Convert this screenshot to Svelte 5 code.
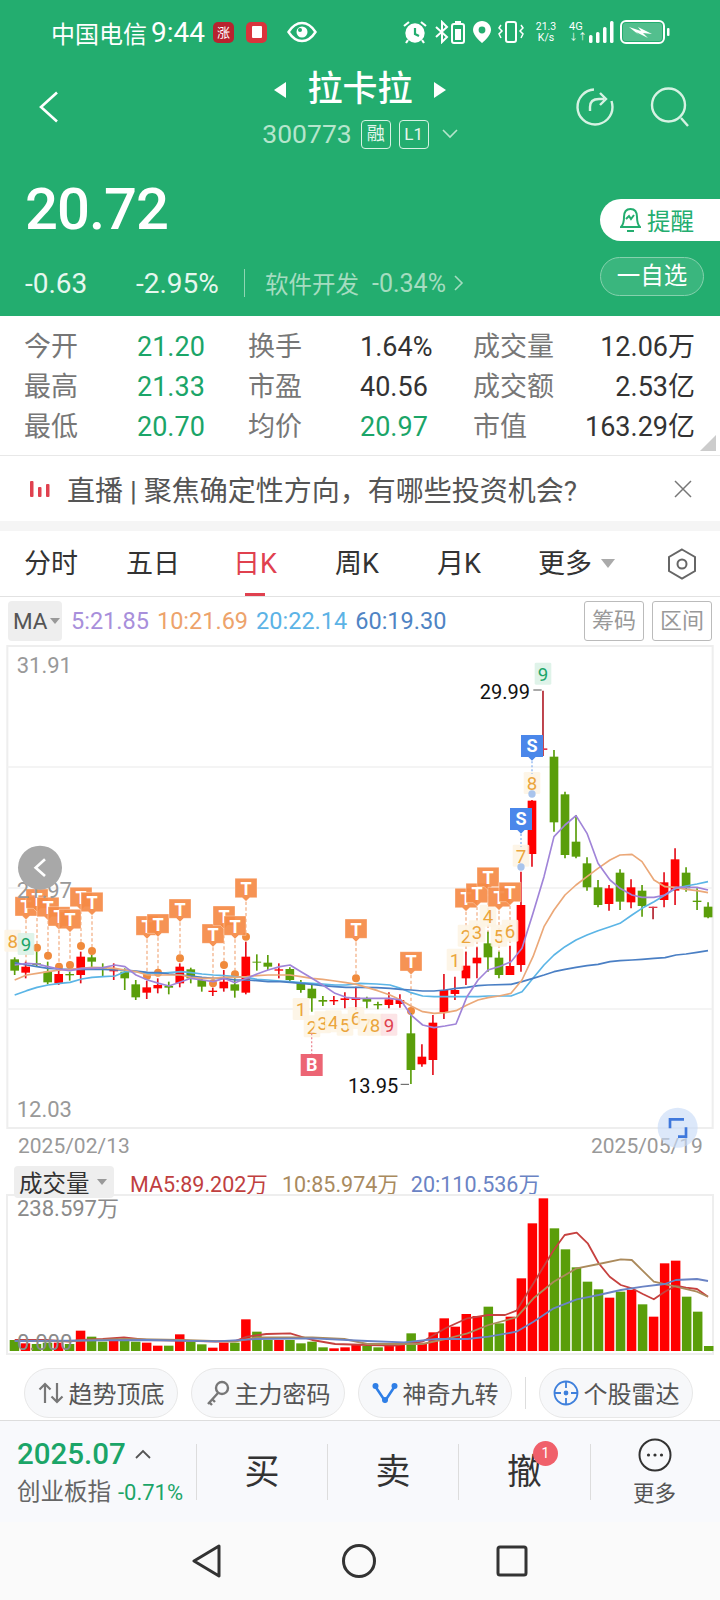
<script>
  // chart data is in 3x units: x = px * 3, y = (px - 650) * 3
  const candles = [
    ['g',922,975,928,962],['r',935,985,950,968],['g',905,950,940,945],['g',935,1003,965,997],
    ['r',960,1005,972,1000],['g',965,992,972,976],['r',905,1000,920,975],['g',915,960,922,935],
    ['g',940,978,955,960],['r',940,990,958,964],['g',955,1020,965,985],['g',990,1050,1003,1042],
    ['r',992,1047,1012,1028],['r',985,1030,1005,1015],['g',995,1033,1008,1013],['r',940,1012,950,1000],
    ['g',953,1000,958,985],['g',985,1025,990,1010],['r',1013,1038,1022,1026],['r',960,1025,995,1015],
    ['g',985,1043,1003,1022],['r',875,1033,920,1028],['g',913,962,935,938],['g',915,960,938,950],
    ['r',940,985,958,962],['g',952,997,957,990],['g',990,1028,1000,1020],['g',1005,1085,1016,1045],
    ['g',1038,1068,1050,1055],['r',1038,1065,1050,1054],['r',1027,1075,1045,1050],['r',1010,1080,1043,1050],
    ['g',1040,1075,1045,1055],['g',1055,1078,1062,1066],['r',1027,1075,1048,1065],['r',1033,1073,1050,1062],
    ['g',1090,1302,1150,1260],['r',1183,1250,1220,1243],['r',1095,1275,1118,1230],['r',972,1107,1020,1087],
    ['r',980,1050,1020,1032],['r',905,1005,947,985],['r',892,985,923,940],['g',845,965,880,922],
    ['g',905,985,923,975],['r',888,975,948,975],['r',665,965,765,945],['r',450,650,452,612],
    ['d',122,318,295,300],['g',300,545,320,517],['g',425,625,433,615],['g',495,625,575,620],
    ['g',622,722,640,712],['g',690,772,712,765],['r',705,782,715,762],['g',658,780,668,755],
    ['r',688,775,712,757],['g',705,800,722,768],['d',770,808,770,774],['r',667,772,697,750],
    ['r',595,765,628,722],['g',652,725,668,715],['g',715,780,752,756],['g',757,805,770,802]
  ];
  const cx = (i) => 44 + i * 33.02;

  const lines = [
    { color: '#5bb5e6', d: '44,1035 80,1022 111,1012 144,1005 180,1000 210,997 245,987 276,982 309,980 345,978 375,965 408,965 443,970 477,970 507,968 543,965 573,968 606,972 640,975 672,977 705,980 740,982 771,988 804,990 840,993 870,995 903,998 936,1000 968,1002 1005,1005 1038,1005 1080,1000 1130,1002 1170,1005 1202,1015 1233,1028 1268,1038 1302,1040 1335,1040 1368,1040 1401,1040 1434,1040 1464,1038 1533,1038 1566,1025 1599,985 1632,945 1662,915 1695,890 1728,870 1761,855 1794,842 1830,830 1860,820 1896,795 1926,775 1962,755 1995,735 2028,715 2058,708 2091,702 2124,695' },
    { color: '#4a7fc4', d: '44,938 80,945 111,950 144,955 180,957 210,958 245,958 276,958 309,958 345,960 375,960 408,963 443,967 477,968 507,972 543,975 573,978 606,982 640,985 672,985 705,990 740,990 771,992 804,995 840,995 870,997 903,1000 936,1003 968,1007 1005,1010 1038,1012 1080,1012 1130,1013 1170,1015 1202,1018 1233,1020 1268,1023 1302,1023 1335,1020 1368,1015 1401,1012 1434,1007 1464,1005 1533,1003 1566,995 1599,985 1632,975 1662,965 1695,958 1728,952 1761,947 1794,943 1830,935 1860,932 1896,930 1926,928 1962,925 1995,923 2028,915 2058,912 2091,907 2124,902' },
    { color: '#eba878', d: '44,990 80,975 111,970 144,965 180,960 210,958 245,955 276,952 309,953 345,955 375,960 408,965 443,975 477,975 507,975 543,975 573,982 606,985 640,985 672,982 705,982 740,980 771,977 804,975 840,975 870,975 903,980 936,985 968,988 1005,993 1038,998 1070,1003 1100,1012 1133,1022 1170,1035 1202,1050 1233,1068 1268,1085 1302,1090 1335,1088 1368,1082 1401,1065 1434,1050 1464,1043 1497,1038 1533,1030 1566,990 1599,920 1632,830 1662,780 1695,735 1728,705 1761,680 1794,655 1830,630 1860,615 1896,613 1926,635 1962,690 1995,710 2028,712 2058,718 2091,722 2124,728' },
    { color: '#a084d8', d: '44,945 80,940 111,942 144,950 180,958 210,962 245,955 276,955 309,953 345,945 375,950 408,975 443,990 477,1000 507,1008 543,995 573,985 606,990 640,995 672,985 705,998 740,985 771,972 804,960 840,950 870,945 903,965 936,985 968,1005 1005,1030 1038,1042 1070,1045 1100,1045 1133,1045 1170,1045 1202,1050 1233,1095 1268,1125 1302,1133 1335,1128 1368,1122 1401,1040 1434,990 1464,960 1497,950 1533,935 1566,895 1599,790 1632,680 1662,560 1695,525 1728,497 1761,550 1794,640 1830,690 1860,715 1896,735 1926,742 1962,742 1995,735 2028,712 2058,712 2091,712 2124,720' }
  ];

  // [center x, top y, dot y]
  const flags = [
    [78,740,0],[111,717,893],[144,742,917],[177,770,950],[210,778,945],[243,712,888],[276,727,903],
    [441,798,978],[474,792,968],[540,747,925],[639,822,1000],[672,768,945],[705,798,973],[738,685,860],
    [1068,807,985],[1233,905,1083],[1398,715,0],[1431,700,0],[1464,652,0],[1497,712,0],[1530,697,0]
  ];
  const digits = [
    [38,873,'8','o'],[78,883,'9','g'],[903,1078,'1','o'],[936,1130,'2','o'],[968,1118,'3','o'],[1000,1115,'4','o'],
    [1035,1125,'5','o'],[1068,1105,'6','o'],[1098,1125,'7','o'],[1125,1125,'8','o'],[1167,1125,'9','r'],
    [1365,930,'1','o'],[1398,858,'2','o'],[1431,845,'3','o'],[1464,798,'4','o'],[1497,858,'5','o'],[1530,843,'6','o'],
    [1563,618,'7','o'],[1596,400,'8','o'],[1629,72,'9','g']
  ];
  const digitColor = { o: '#eba53c', g: '#1ba568', r: '#e0414f' };
  const digitBg = { o: '#fdf3e3', g: '#d9f1e5', r: '#fbdfe2' };

  // volume: [colour, top] with top in the 1140-based 3x y
  const bars = 'g600 r610 g612 g608 r608 g612 r572 g590 g605 r595 g600 g605 r608 r617 g617 r583 g605 g613 r623 r608 g608 r538 g575 g600 r600 g600 g610 g605 g622 r625 r622 r612 g618 g622 r615 r615 g580 r612 r577 r535 r560 r522 r528 g500 g550 r530 r415 r250 r175 g265 g328 g382 g425 g448 r473 g455 r450 g493 r530 r370 r362 g470 g515 g618'
    .split(' ').map((s) => [s[0], +s.slice(1)]);
  const vy = (y) => y / 3 + 1140 - 1199;
  const scaleVol = (s) => s.split(' ').map((p) => {
    const [x, y] = p.split(',');
    return `${(+x / 2.178).toFixed(1)},${vy(+y).toFixed(1)}`;
  }).join(' ');
  const volLines = [
    { color: '#c6413f', d: scaleVol('32,600 100,600 150,605 178,600 224,597 270,592 320,600 394,602 470,605 512,603 538,590 580,582 632,580 680,600 730,612 800,615 860,617 920,605 970,565 1018,535 1064,525 1100,525 1125,512 1162,430 1206,330 1230,285 1256,278 1280,310 1304,370 1328,410 1352,435 1376,445 1400,462 1424,478 1448,455 1472,437 1494,443 1518,447 1542,470') },
    { color: '#ab8a5c', d: scaleVol('32,603 150,603 270,597 394,600 512,605 560,592 680,592 750,597 800,612 920,612 970,597 1018,580 1064,555 1125,532 1162,475 1206,425 1256,385 1304,372 1352,358 1376,360 1424,425 1472,440 1518,455 1542,470') },
    { color: '#6a83c4', d: scaleVol('32,603 150,602 320,600 470,604 560,597 680,595 800,603 880,607 950,597 1018,597 1064,590 1125,575 1162,545 1206,505 1256,478 1304,465 1352,450 1400,440 1448,432 1472,420 1518,417 1542,423') }
  ];

  const stats = [
    ['今开','21.20','换手','1.64%','成交量','12.06万'],
    ['最高','21.33','市盈','40.56','成交额','2.53亿'],
    ['最低','20.70','均价','20.97','市值','163.29亿']
  ];
  const greens = ['21.20','21.33','20.70','20.97'];
  const tabs = ['分时','五日','日K','周K','月K'];
</script>

<div class="phone">
  <header class="head">
    <div class="status">
      <span class="carrier">中国电信</span>
      <span class="clock">9:44</span>
      <span class="app-red dark">涨</span>
      <span class="app-red"><i></i></span>
      <svg class="eye" width="30" height="22" viewBox="0 0 30 22" fill="none" stroke="#fff" stroke-width="2.4">
        <path d="M1.5 11C6 4 10 2 15 2s9 2 13.5 9C24 18 20 20 15 20S6 18 1.5 11z" />
        <circle cx="15" cy="11" r="5.5" fill="#fff" stroke="none" />
        <circle cx="13" cy="9" r="2" fill="#23ad6f" stroke="none" />
      </svg>
      <div class="sys">
        <svg width="26" height="24" viewBox="0 0 26 24" fill="none" stroke="#fff" stroke-width="2.2">
          <circle cx="13" cy="13" r="8.6" fill="#fff" />
          <path d="M13 8v6l4 2" stroke="#23ad6f" />
          <path d="M2 6l5-4M24 6l-5-4M6 20l-2 3M20 20l2 3" />
        </svg>
        <svg width="32" height="24" viewBox="0 0 32 24" fill="none" stroke="#fff" stroke-width="2">
          <path d="M2 7l11 10-5 5V2l5 5L2 17" />
          <rect x="18" y="4" width="12" height="19" rx="2" />
          <rect x="21" y="9" width="6" height="11" fill="#fff" stroke="none" />
          <path d="M21 2h6" />
        </svg>
        <svg width="20" height="24" viewBox="0 0 20 24">
          <path d="M10 1C5 1 1 5 1 10c0 6 9 13 9 13s9-7 9-13c0-5-4-9-9-9z" fill="#fff" />
          <circle cx="10" cy="10" r="3.4" fill="#23ad6f" />
        </svg>
        <svg width="26" height="24" viewBox="0 0 26 24" fill="none" stroke="#fff" stroke-width="2">
          <rect x="8" y="2" width="10" height="20" rx="2" />
          <path d="M3 5l-2 3 3 3-3 3 2 4M23 5l2 3-3 3 3 3-2 4" stroke-width="1.5" />
        </svg>
        <span class="speed">21.3<br />K/s</span>
        <div class="net">
          <span>4G</span>
          <small>↓↑</small>
        </div>
        <svg class="bars" width="25" height="24" viewBox="0 0 25 24" fill="#fff">
          <rect x="0" y="15" width="3.5" height="8" rx="1.5" />
          <rect x="7" y="12" width="3.5" height="11" rx="1.5" />
          <rect x="14" y="7" width="3.5" height="16" rx="1.5" />
          <rect x="21" y="1" width="3.5" height="22" rx="1.5" />
        </svg>
        <svg width="50" height="24" viewBox="0 0 50 24" fill="none">
          <rect x="1" y="1" width="43" height="22" rx="5" stroke="#fff" stroke-width="2" />
          <rect x="3" y="3" width="39" height="18" rx="3" fill="#fff" fill-opacity=".22" />
          <path d="M9 7l12 4-3-4 14 7-9-1 5 5-12-6 3 3z" fill="#fff" />
          <rect x="47" y="8" width="2.5" height="8" rx="1" fill="#fff" />
        </svg>
      </div>
    </div>

    <div class="nav">
      <svg class="back" width="20" height="32" viewBox="0 0 20 32" fill="none" stroke="#fff" stroke-width="2.6">
        <path d="M18 1.5L2 16l16 14.5" />
      </svg>
      <div class="title">
        <div class="name">
          <i class="tri left"></i>
          <span>拉卡拉</span>
          <i class="tri right"></i>
        </div>
        <div class="code">
          <span class="num">300773</span>
          <span class="tag">融</span>
          <span class="tag l1">L1</span>
          <svg width="16" height="10" viewBox="0 0 16 10" fill="none" stroke="#b5e5cc" stroke-width="1.6"><path d="M1 1l7 7 7-7" /></svg>
        </div>
      </div>
      <div class="nav-right">
        <svg width="40" height="40" viewBox="0 0 40 40" fill="none" stroke="#d6f2e3" stroke-width="2.4">
          <path d="M19 2.5A17.5 17.5 0 1 0 37.5 20c0-2.5-.4-4-1-6" />
          <path d="M15 24v-4c0-5 3-8 9-8h5M25 6l6 6-6 6" />
        </svg>
        <svg width="40" height="40" viewBox="0 0 40 40" fill="none" stroke="#d6f2e3" stroke-width="2.4">
          <circle cx="18.5" cy="18" r="16.5" />
          <path d="M31 31l7 8" />
        </svg>
      </div>
    </div>

    <div class="quote">
      <div>
        <div class="price">20.72</div>
        <div class="change">
          <span class="chg1">-0.63</span>
          <span class="chg2">-2.95%</span>
          <span class="vsep"></span>
          <span class="sector">软件开发</span>
          <span class="sector-chg">-0.34%</span>
          <svg width="10" height="16" viewBox="0 0 10 16" fill="none" stroke="#a5dcc0" stroke-width="1.6"><path d="M1 1l7 7-7 7" /></svg>
        </div>
      </div>
      <div class="pills">
        <div class="remind">
          <svg width="21" height="26" viewBox="0 0 21 26" fill="none" stroke="#23ad6f" stroke-width="2">
            <path d="M10.5 2C6 2 4 5.5 4 10c0 5-1 8-3 10h19c-2-2-3-5-3-10 0-4.5-2-8-6.5-8z" />
            <path d="M7 24h7M6 12l3-3 2 3 3-4" />
          </svg>
          <span>提醒</span>
        </div>
        <div class="watch">一自选</div>
      </div>
    </div>
  </header>

  <section class="stats">
    {#each stats as row}
      {#each row as cell, i}
        <span class:label={i % 2 === 0} class:green={greens.includes(cell)} class:last={i === 5}>{cell}</span>
      {/each}
    {/each}
    <i class="corner"></i>
  </section>

  <section class="news">
    <svg width="20" height="16" viewBox="0 0 20 16" fill="#e0414f">
      <rect x="0" y="0" width="3.5" height="16" rx="1" />
      <rect x="8" y="6" width="3.5" height="10" rx="1" />
      <rect x="16" y="3" width="3.5" height="13" rx="1" />
    </svg>
    <span>直播 | 聚焦确定性方向，有哪些投资机会?</span>
    <svg class="close" width="18" height="18" viewBox="0 0 18 18" stroke="#777" stroke-width="1.5"><path d="M1 1l16 16M17 1L1 17" /></svg>
  </section>

  <nav class="tabs">
    {#each tabs as t}
      <span class="tab" class:on={t === '日K'}>{t}</span>
    {/each}
    <span class="tab more">更多<i></i></span>
    <svg class="hex" width="28" height="32" viewBox="0 0 28 32" fill="none" stroke="#666" stroke-width="2">
      <path d="M14 1.5L27 9v14l-13 7.5L1 23V9z" />
      <circle cx="14" cy="16" r="4.5" />
    </svg>
  </nav>

  <div class="ma-row">
    <span class="chip">MA<i></i></span>
    <span class="m5">5:21.85</span>
    <span class="m10">10:21.69</span>
    <span class="m20">20:22.14</span>
    <span class="m60">60:19.30</span>
    <span class="btn first">筹码</span>
    <span class="btn">区间</span>
  </div>

  <div class="chart">
    <svg width="720" height="516" viewBox="0 -15 2160 1548">
      <rect x="22" y="-12" width="2116" height="1446" fill="#fff" stroke="#eee" stroke-width="6" />
      {#each [351, 714, 1077] as y}
        <line x1="22" x2="2138" y1={y} y2={y} stroke="#f1f1f1" stroke-width="4" />
      {/each}
      <text class="axis" x="50" y="70">31.91</text>
      <text class="axis" x="50" y="1400">12.03</text>
      <text class="date" x="54" y="1508">2025/02/13</text>
      <text class="date" x="1773" y="1508">2025/05/19</text>

      {#each flags as [x, top, dot]}
        <line x1={x} x2={x} y1={top + 70} y2={dot || top + 200} stroke="#f3b48c" stroke-width="4" stroke-dasharray="10 7" />
        {#if dot}<circle cx={x} cy={dot} r="12" fill="#f08a3c" />{/if}
      {/each}

      {#each candles as [c, wt, wb, bt, bb], i}
        <line x1={cx(i)} x2={cx(i)} y1={wt} y2={wb} stroke={c === 'g' ? '#5a9e0a' : c === 'd' ? '#b2202c' : '#e3101c'} stroke-width="5" />
        <rect x={cx(i) - 13} y={bt} width="26" height={bb - bt} fill={c === 'g' ? '#5a9e0a' : c === 'd' ? '#e3394a' : '#ff0000'} />
      {/each}

      {#each lines as l}
        <polyline points={l.d} fill="none" stroke={l.color} stroke-width="5" stroke-linejoin="round" />
      {/each}

      {#each digits as [x, y, n, k]}
        <rect x={x - 25} y={y - 34} width="50" height="66" rx="4" fill={digitBg[k]} fill-opacity=".85" />
        <text class="digit" x={x} y={y + 21} fill={digitColor[k]}>{n}</text>
      {/each}

      {#each flags as [x, top]}
        <path d="M{x - 33} {top}h66v58h-22l-11 11-11-11h-22z" fill="#f58a45" fill-opacity=".92" stroke="#fff" stroke-opacity=".5" stroke-width="2" />
        <text class="flag" x={x} y={top + 50}>T</text>
      {/each}
      <text class="axis" x="50" y="743">21.97</text>

      <path d="M902 1212h66v66h-66z" fill="#ec6574" />
      <text class="flag" x="935" y="1264">B</text>
      <line x1="935" x2="935" y1="1150" y2="1212" stroke="#ec8d98" stroke-width="4" stroke-dasharray="6 6" />

      <line x1="1596" x2="1596" y1="322" y2="372" stroke="#8fb6f0" stroke-width="4" stroke-dasharray="6 6" />
      <circle cx="1596" cy="432" r="11" fill="#a9c4ec" />
      <path d="M1563 255h66v66h-22l-11 11-11-11h-22z" fill="#4a87ea" />
      <text class="flag" x="1596" y="306">S</text>
      <line x1="1563" x2="1563" y1="540" y2="590" stroke="#8fb6f0" stroke-width="4" stroke-dasharray="6 6" />
      <circle cx="1563" cy="651" r="11" fill="#a9c4ec" />
      <path d="M1530 474h66v66h-22l-11 11-11-11h-22z" fill="#4a87ea" />
      <text class="flag" x="1563" y="526">S</text>

      <text class="mark" x="1590" y="146" text-anchor="end">29.99</text>
      <line x1="1600" x2="1625" y1="120" y2="120" stroke="#555" stroke-width="3" />
      <text class="mark" x="1195" y="1330" text-anchor="end">13.95</text>
      <line x1="1202" x2="1227" y1="1303" y2="1303" stroke="#555" stroke-width="3" />

      <circle cx="120" cy="653" r="66" fill="#a8a8a8" />
      <path d="M135 628l-28 25 28 25" fill="none" stroke="#fff" stroke-width="8" />
      <circle cx="2033" cy="1433" r="60" fill="#c9dbf8" fill-opacity=".65" />
      <path d="M2010 1435v-27h42M2058 1432v28h-24" fill="none" stroke="#3f78dc" stroke-width="8" />
    </svg>
  </div>

  <section class="volume">
    <div class="vol-legend">
      <span class="chip big">成交量<i></i></span>
      <span class="v5">MA5:89.202万</span>
      <span class="v10">10:85.974万</span>
      <span class="v20">20:110.536万</span>
    </div>
    <svg class="vol-plot" width="720" height="156" viewBox="0 0 720 156">
      <rect x="7" y="-4" width="706" height="159" fill="none" stroke="#eee" stroke-width="2" />
      {#each bars as [c, top], i}
        <rect x={14.7 + i * 11.02 - 5} y={vy(top)} width="9.5" height={vy(633) - vy(top)} fill={c === 'g' ? '#5a9e0a' : '#ff0000'} />
      {/each}
      {#each volLines as l}
        <polyline points={l.d} fill="none" stroke={l.color} stroke-width="1.8" stroke-linejoin="round" />
      {/each}
      <text class="vol-axis" x="17" y="17">238.597万</text>
      <text class="vol-axis" x="17" y="151">0.000</text>
    </svg>
  </section>

  <div class="tools">
    <span class="tool">
      <svg width="26" height="24" viewBox="0 0 26 24" fill="none" stroke="#777" stroke-width="2.2">
        <path d="M7 22V3M1.5 8.5L7 3l5.5 5.5M19 2v19M13.5 15.5L19 21l5.5-5.5" />
      </svg>趋势顶底
    </span>
    <span class="tool">
      <svg width="24" height="26" viewBox="0 0 24 26" fill="none" stroke="#777" stroke-width="2.4">
        <circle cx="16" cy="8" r="6" />
        <path d="M12 13L2 24M6 19l3 3M3 22l3 3" />
      </svg>主力密码
    </span>
    <span class="tool">
      <svg width="26" height="22" viewBox="0 0 26 22" fill="none" stroke="#2f7fe6" stroke-width="2.6">
        <path d="M3 4l10 15L23 4" />
        <circle cx="3.5" cy="4" r="3" fill="#2f7fe6" stroke="none" />
        <circle cx="22.5" cy="4" r="3" fill="#2f7fe6" stroke="none" />
        <circle cx="13" cy="18" r="3" fill="#2f7fe6" stroke="none" />
      </svg>神奇九转
    </span>
    <i class="tool-sep"></i>
    <span class="tool">
      <svg width="26" height="26" viewBox="0 0 26 26" fill="none" stroke="#3f80dc" stroke-width="1.8">
        <circle cx="13" cy="13" r="11.5" />
        <path d="M13 1v7M13 18v7M1 13h7M18 13h7" />
        <circle cx="13" cy="13" r="1.5" fill="#3f80dc" />
      </svg>个股雷达
    </span>
  </div>

  <footer class="trade">
    <div class="index">
      <div class="idx-top">
        <b>2025.07</b>
        <svg width="16" height="10" viewBox="0 0 16 10" fill="none" stroke="#555" stroke-width="1.8"><path d="M1 9l7-7 7 7" /></svg>
      </div>
      <div class="idx-sub"><span>创业板指</span><em>-0.71%</em></div>
    </div>
    <div class="act">买</div>
    <div class="act">卖</div>
    <div class="act">撤<i class="badge">1</i></div>
    <div class="act more-act">
      <svg width="34" height="34" viewBox="0 0 34 34" fill="none" stroke="#333" stroke-width="2">
        <circle cx="17" cy="17" r="15.5" />
        <circle cx="10.5" cy="17" r="1.6" fill="#333" stroke="none" />
        <circle cx="17" cy="17" r="1.6" fill="#333" stroke="none" />
        <circle cx="23.5" cy="17" r="1.6" fill="#333" stroke="none" />
      </svg>
      <span>更多</span>
    </div>
  </footer>

  <div class="sysnav">
    <svg width="30" height="34" viewBox="0 0 30 34" fill="none" stroke="#333" stroke-width="3" stroke-linejoin="round"><path d="M27 2L2 17l25 15z" /></svg>
    <svg width="34" height="34" viewBox="0 0 34 34" fill="none" stroke="#333" stroke-width="3"><circle cx="17" cy="17" r="15.5" /></svg>
    <svg width="32" height="32" viewBox="0 0 32 32" fill="none" stroke="#333" stroke-width="3"><rect x="2" y="2" width="28" height="28" rx="2" /></svg>
  </div>
</div>

<style>
  :global(body) {
    margin: 0;
    background: #fff;
  }
  .phone {
    width: 720px;
    height: 1600px;
    display: flex;
    flex-direction: column;
    overflow: hidden;
    font-family: Roboto, "Noto Sans CJK SC", sans-serif;
    color: #333;
  }
  i { font-style: normal; }
  svg { display: block; flex-shrink: 0; }

  .head {
    height: 316px;
    background: #23ad6f;
    color: #fff;
    flex-shrink: 0;
  }
  .status {
    height: 64px;
    padding-left: 51px;
    display: flex;
    align-items: center;
    box-sizing: border-box;
  }
  .carrier { font-size: 24px; width: 100px; }
  .clock { font-size: 28px; width: 62px; }
  .app-red {
    width: 21px;
    height: 21px;
    border-radius: 5px;
    background: #d9343c;
    margin-right: 12px;
    font-size: 13px;
    line-height: 21px;
    text-align: center;
    display: grid;
    place-items: center;
  }
  .app-red.dark { background: #b8232f; }
  .app-red i { width: 10px; height: 12px; background: #fff; border-radius: 1px; }
  .eye { margin-left: 8px; }
  .sys {
    margin-left: auto;
    margin-right: 50px;
    display: flex;
    align-items: center;
    gap: 6px;
  }
  .speed { font-size: 10.5px; line-height: 11px; text-align: center; width: 28px; margin-left: 2px; }
  .net { font-size: 11px; line-height: 11px; width: 16px; margin-left: 3px; }
  .net small { font-size: 9px; display: block; }
  .bars { margin-left: -2px; }

  .nav {
    height: 86px;
    display: grid;
    grid-template-columns: 1fr auto 1fr;
    align-items: center;
  }
  .back { margin-left: 39px; }
  .title { align-self: start; padding-top: 6px; }
  .nav-right {
    display: flex;
    justify-content: flex-end;
    gap: 35px;
    padding-right: 30px;
  }
  .name {
    font-size: 35px;
    font-weight: 500;
    line-height: 40px;
    display: flex;
    align-items: center;
    justify-content: center;
    gap: 21px;
  }
  .tri { width: 0; height: 0; border-top: 8.5px solid transparent; border-bottom: 8.5px solid transparent; }
  .tri.left { border-right: 12px solid #fff; }
  .tri.right { border-left: 12px solid #fff; }
  .code {
    display: flex;
    align-items: center;
    justify-content: center;
    margin-top: 9px;
    color: #b5e5cc;
  }
  .num { font-size: 26.5px; margin-right: 9px; line-height: 30px; }
  .tag {
    width: 28px;
    height: 27px;
    border: 1px solid #d6f2e3;
    border-radius: 4px;
    font-size: 18px;
    line-height: 26px;
    text-align: center;
    color: #e3f6ec;
    margin-right: 8px;
  }
  .tag.l1 { font-size: 17px; margin-right: 13px; }

  .quote {
    height: 166px;
    display: flex;
    justify-content: space-between;
    padding-left: 25px;
  }
  .price {
    font-size: 58px;
    font-weight: 500;
    line-height: 60px;
    margin-top: 29px;
    letter-spacing: -1px;
  }
  .change {
    display: flex;
    align-items: center;
    height: 30px;
    margin-top: 29px;
    font-size: 28px;
    color: #e6f7ee;
  }
  .chg1 { width: 111px; }
  .chg2 { width: 108px; }
  .vsep { width: 1px; height: 28px; background: #8fd6b3; margin-right: 20px; }
  .sector { font-size: 23.5px; color: #a5dcc0; margin-right: 13px; }
  .sector-chg { font-size: 25px; color: #a5dcc0; margin-right: 8px; }
  .pills {
    width: 120px;
    padding-top: 49px;
    display: flex;
    flex-direction: column;
    gap: 16px;
  }
  .remind {
    height: 42px;
    border-radius: 21px 0 0 21px;
    background: #fff;
    color: #23ad6f;
    font-size: 23.5px;
    display: flex;
    align-items: center;
    padding-left: 20px;
    gap: 6px;
  }
  .watch {
    width: 104px;
    height: 39px;
    box-sizing: border-box;
    border: 1px solid #85d1ad;
    border-radius: 20px;
    background: #3ab67e;
    font-size: 23.5px;
    line-height: 37px;
    text-align: center;
  }

  .stats {
    height: 140px;
    box-sizing: border-box;
    padding: 11px 25px 0 24px;
    display: grid;
    grid-template-columns: 113px 111px 112px 113px 100px 1fr;
    grid-auto-rows: 40px;
    align-items: center;
    font-size: 27px;
    line-height: 40px;
    border-bottom: 1px solid #e8e8e8;
    position: relative;
    flex-shrink: 0;
  }
  .label { color: #777; }
  .green { color: #1ba568; }
  .last { text-align: right; white-space: nowrap; }
  .corner {
    position: absolute;
    right: 4px;
    bottom: 4px;
    border-left: 16px solid transparent;
    border-bottom: 16px solid #ccc;
  }

  .news {
    height: 75px;
    box-sizing: border-box;
    display: flex;
    align-items: center;
    padding: 0 28px 0 30px;
    font-size: 28px;
    color: #555;
    border-bottom: 10px solid #f5f5f5;
    flex-shrink: 0;
  }
  .news span { margin-left: 17px; }
  .close { margin-left: auto; }

  .tabs {
    height: 66px;
    box-sizing: border-box;
    display: flex;
    align-items: center;
    font-size: 27px;
    border-bottom: 1px solid #e2e2e2;
    flex-shrink: 0;
  }
  .tab {
    width: 102px;
    text-align: center;
    height: 100%;
    line-height: 66px;
    position: relative;
    box-sizing: border-box;
  }
  .tab.on { color: #e0414f; }
  .tab.on::after {
    content: "";
    position: absolute;
    left: 41px;
    bottom: 0;
    width: 20px;
    height: 3px;
    background: #e0414f;
  }
  .tab.more {
    width: 100px;
    margin-left: 28px;
    text-align: left;
    display: flex;
    align-items: center;
    gap: 9px;
  }
  .tab.more i {
    border-left: 7px solid transparent;
    border-right: 7px solid transparent;
    border-top: 9px solid #aaa;
  }
  .hex { margin-left: auto; margin-right: 24px; }

  .ma-row {
    height: 48px;
    display: flex;
    align-items: center;
    font-size: 23.5px;
    padding: 0 8px;
    flex-shrink: 0;
  }
  .chip {
    background: #eee;
    border-radius: 4px;
    height: 40px;
    width: 54px;
    box-sizing: border-box;
    padding-left: 5px;
    display: flex;
    align-items: center;
    gap: 2px;
    color: #555;
    font-size: 22.5px;
    margin-right: 9px;
  }
  .chip i {
    border-left: 5px solid transparent;
    border-right: 5px solid transparent;
    border-top: 6px solid #999;
  }
  .m5 { color: #a88fdb; margin-right: 8px; }
  .m10 { color: #eda36b; margin-right: 8px; }
  .m20 { color: #5cb3e6; margin-right: 8px; }
  .m60 { color: #4f84c4; }
  .btn {
    width: 60px;
    height: 40px;
    box-sizing: border-box;
    border: 1px solid #bbb;
    border-radius: 3px;
    color: #999;
    font-size: 22px;
    line-height: 38px;
    text-align: center;
    margin-left: 8px;
  }
  .btn.first { margin-left: auto; }

  .chart { height: 516px; flex-shrink: 0; }
  .axis, .date {
    font-family: Roboto, sans-serif;
    fill: #999;
  }
  .axis { font-size: 66px; }
  .date { font-size: 63px; }
  .digit {
    font-family: Roboto, sans-serif;
    font-size: 56px;
    text-anchor: middle;
  }
  .flag {
    font-family: Roboto, sans-serif;
    font-size: 54px;
    font-weight: 700;
    fill: #fff;
    text-anchor: middle;
  }
  .mark {
    font-family: Roboto, sans-serif;
    font-size: 60px;
    fill: #111;
  }

  .volume { height: 194px; flex-shrink: 0; }
  .vol-legend {
    height: 38px;
    display: flex;
    align-items: center;
    padding-left: 14px;
    font-size: 21.5px;
    box-sizing: border-box;
    padding-top: 4px;
  }
  .vol-plot { overflow: visible; }
  .chip.big {
    width: 100px;
    height: 32px;
    font-size: 23.5px;
    color: #333;
    margin-right: 16px;
    gap: 7px;
  }
  .v5 { color: #c0403f; margin-right: 14px; }
  .v10 { color: #a98a5e; margin-right: 12px; }
  .v20 { color: #6a83c4; }
  .vol-axis {
    font-family: Roboto, "Noto Sans CJK SC", sans-serif;
    font-size: 22px;
    fill: #8a8a8a;
  }

  .tools {
    height: 66px;
    box-sizing: border-box;
    padding: 13px 0 3px 24px;
    display: flex;
    align-items: center;
    gap: 13px;
    border-bottom: 1px solid #ddd;
    flex-shrink: 0;
  }
  .tool {
    width: 154px;
    height: 50px;
    box-sizing: border-box;
    border: 1px solid #e8e8e8;
    border-radius: 25px;
    background: #f7f8fa;
    display: flex;
    align-items: center;
    justify-content: center;
    gap: 5px;
    font-size: 24px;
    color: #555;
  }
  .tool-sep { width: 1px; height: 32px; background: #ddd; }

  .trade {
    height: 101px;
    background: #f8f9fc;
    display: grid;
    grid-template-columns: 196px 131px 131px 132px 1fr;
    align-items: center;
    flex-shrink: 0;
  }
  .index { padding-left: 17px; }
  .idx-top { display: flex; align-items: center; gap: 9px; }
  .idx-top b { font-size: 29.5px; font-weight: 500; color: #1ba568; line-height: 34px; }
  .idx-sub {
    display: flex;
    align-items: baseline;
    gap: 7px;
    margin-top: 2px;
    white-space: nowrap;
  }
  .idx-sub span { font-size: 23.5px; color: #666; }
  .idx-sub em { font-size: 22px; font-style: normal; color: #1ba568; }
  .act {
    height: 56px;
    border-left: 1px solid #ddd;
    font-size: 35px;
    line-height: 58px;
    text-align: center;
    position: relative;
    color: #333;
  }
  .badge {
    position: absolute;
    left: 74px;
    top: -3px;
    width: 25px;
    height: 25px;
    border-radius: 50%;
    background: #f0606a;
    color: #fff;
    font-size: 14px;
    line-height: 25px;
  }
  .more-act {
    font-size: 21.5px;
    line-height: 26px;
    color: #555;
    display: flex;
    flex-direction: column;
    align-items: center;
    padding-right: 2px;
  }
  .more-act svg { margin-top: -6px; margin-bottom: 9px; }

  .sysnav {
    flex: 1;
    background: #fafafa;
    display: grid;
    grid-template-columns: 30px 34px 32px;
    justify-content: center;
    column-gap: 120px;
    align-items: center;
    justify-items: center;
  }
</style>
